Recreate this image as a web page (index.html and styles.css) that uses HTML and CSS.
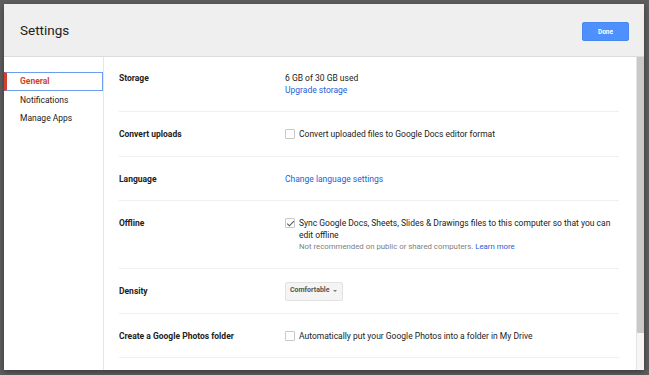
FILE: index.html
```
<!DOCTYPE html>
<html>
<head>
<meta charset="utf-8">
<link rel="stylesheet" href="styles.css">
</head>
<body>
<div class="dialog">
  <div class="header">
    <div class="title">Settings</div>
    <button class="done">Done</button>
  </div>
  <div class="body">
    <div class="nav">
      <div class="nav-item active">General</div>
      <div class="nav-item">Notifications</div>
      <div class="nav-item">Manage Apps</div>
    </div>
    <div class="main">
      <div class="content">
        <div class="row">
          <div class="label">Storage</div>
          <div class="value">
            <div>6 GB of 30 GB used</div>
            <a class="link">Upgrade storage</a>
          </div>
        </div>
        <div class="row">
          <div class="label">Convert uploads</div>
          <div class="value check-line">
            <span class="cb"></span>
            <span>Convert uploaded files to Google Docs editor format</span>
          </div>
        </div>
        <div class="row">
          <div class="label">Language</div>
          <div class="value"><a class="link">Change language settings</a></div>
        </div>
        <div class="row offline">
          <div class="label">Offline</div>
          <div class="value check-line">
            <span class="cb checked"><svg viewBox="0 0 11 11" width="11" height="11"><path d="M2.2 5.6 L4.4 7.8 L8.9 3.1" fill="none" stroke="#555" stroke-width="1.1"/></svg></span>
            <div>
              <div>Sync Google Docs, Sheets, Slides &amp; Drawings files to this computer so that you can edit offline</div>
              <div class="hint">Not recommended on public or shared computers. <a class="link">Learn more</a></div>
            </div>
          </div>
        </div>
        <div class="row density">
          <div class="label">Density</div>
          <div class="value">
            <span class="dropdown">Comfortable <span class="arrow"></span></span>
          </div>
        </div>
        <div class="row">
          <div class="label">Create a Google Photos folder</div>
          <div class="value check-line">
            <span class="cb"></span>
            <span>Automatically put your Google Photos into a folder in My Drive</span>
          </div>
        </div>
      </div>
      <div class="scrollbar"><div class="thumb"></div></div>
    </div>
  </div>
</div>
</body>
</html>
```
FILE: styles.css
```
* { box-sizing: border-box; }
html, body { margin: 0; padding: 0; }
body {
  width: 649px;
  height: 375px;
  background: #5e5e5e;
  font-family: Roboto, "Liberation Sans", Arial, sans-serif;
  color: #222;
  padding: 4px 5px 5px 4px;
  overflow: hidden;
}
.dialog {
  width: 640px;
  height: 366px;
  background: #fff;
  display: flex;
  flex-direction: column;
  box-shadow: 0 2px 6px rgba(0,0,0,0.4);
  overflow: hidden;
}
.header {
  height: 53px;
  flex: none;
  background: #efefef;
  border-bottom: 1px solid #dcdcdc;
  display: flex;
  align-items: center;
  justify-content: space-between;
  padding: 0 15px 0 16px;
}
.title {
  font-size: 13.5px;
  color: #222;
}
.done {
  width: 47px;
  height: 19px;
  background: #4d90fe;
  border: 1px solid #4787f0;
  border-radius: 2px;
  color: #fff;
  font-family: inherit;
  font-weight: bold;
  font-size: 6.5px;
  padding: 0;
  margin-top: 3px;
}
.body {
  flex: 1;
  display: flex;
  min-height: 0;
}
.nav {
  width: 100px;
  flex: none;
  border-right: 1px solid #e6e6e6;
  padding-top: 15px;
}
.nav-item {
  height: 18px;
  line-height: 18px;
  font-size: 8.5px;
  padding-left: 16px;
  color: #222;
}
.nav-item.active {
  height: 19px;
  line-height: 17px;
  color: #d23f31;
  font-weight: bold;
  border: 1px solid #6d9eeb;
  border-left: 3px solid #d23f31;
  padding-left: 13px;
}
.main {
  flex: 1;
  display: flex;
  min-width: 0;
}
.content {
  flex: 1;
  padding: 0 17px 0 15px;
}
.row {
  display: flex;
  padding: 17px 0 15px;
  border-bottom: 1px solid #f0f0f0;
  font-size: 8.5px;
  line-height: 11.5px;
}
.row:first-child { padding-top: 16px; }
.label {
  width: 166px;
  flex: none;
  font-weight: bold;
  color: #222;
}
.value {
  flex: 1;
  color: #222;
}
.link {
  color: #1a62d8;
  text-decoration: none;
}
.check-line {
  display: flex;
  align-items: flex-start;
}
.cb {
  width: 10px;
  height: 10px;
  flex: none;
  border: 1px solid #c8c8c8;
  border-radius: 1px;
  margin-right: 4px;
  position: relative;
}
.cb svg {
  position: absolute;
  left: -1px;
  top: -1px;
}
.hint {
  color: #808080;
  font-size: 7.8px;
  line-height: 12.5px;
}
.offline { padding-bottom: 14px; }
.density { padding-top: 13px; padding-bottom: 12px; }
.density .label { padding-top: 4px; }
.dropdown {
  display: inline-flex;
  align-items: center;
  height: 19px;
  padding: 0 5px 0 4px;
  background: #f4f4f4;
  border: 1px solid #e2e2e2;
  border-radius: 2px;
  font-size: 7px;
  font-weight: bold;
  color: #555;
}
.arrow {
  display: inline-block;
  width: 0;
  height: 0;
  margin-left: 4px;
  border-left: 2.5px solid transparent;
  border-right: 2.5px solid transparent;
  border-top: 2.5px solid #777;
}
.scrollbar {
  width: 8px;
  flex: none;
  background: #f6f6f6;
  border-left: 1px solid #e4e4e4;
}
.thumb {
  height: 276px;
  background: #c9c9c9;
}
```
